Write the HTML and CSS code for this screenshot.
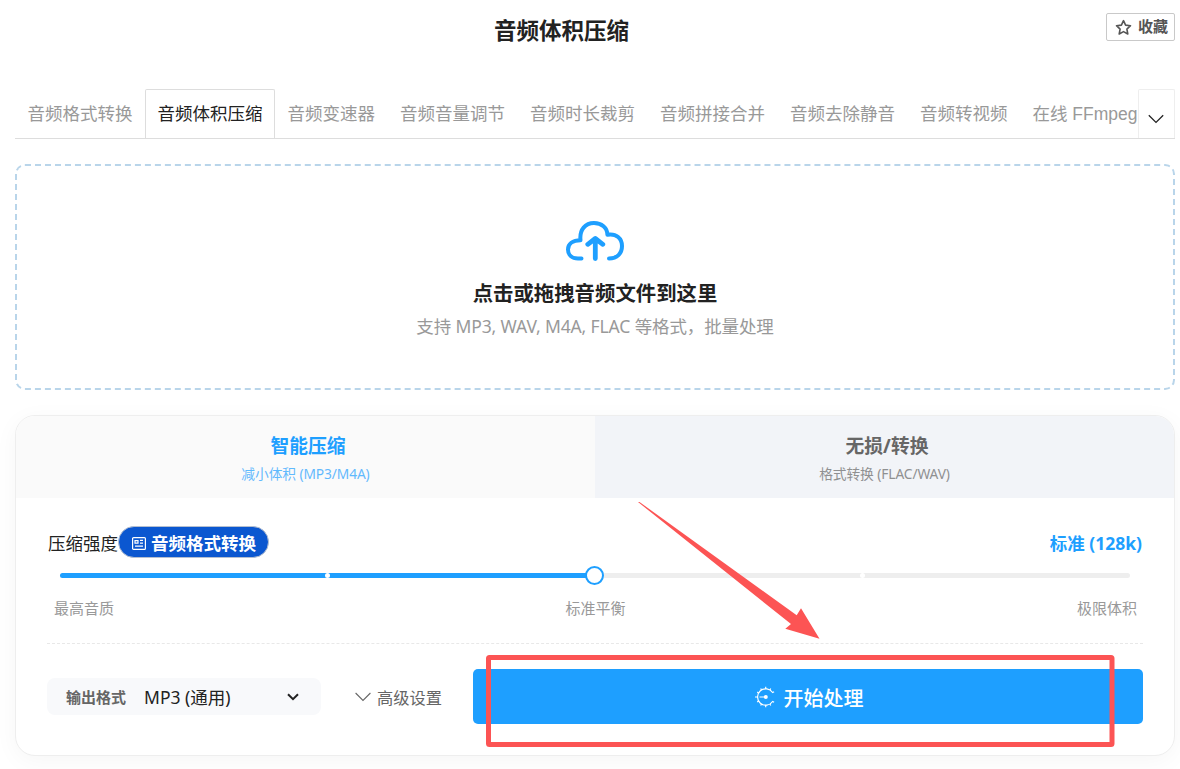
FILE: index.html
```html
<!DOCTYPE html>
<html lang="zh-CN">
<head>
    <meta charset="UTF-8">
    <meta name="viewport" content="width=device-width, initial-scale=1.0">
    <title>音频体积压缩</title>
    <link rel="stylesheet" href="styles.css">
</head>
<body>
    <div class="container">
        <header class="header">
            <h1>音频体积压缩</h1>
            <button class="btn-fav">
                <svg width="17" height="17" viewBox="0 0 17 17" fill="none" stroke="#555" stroke-width="1.6" stroke-linejoin="round"><path d="M8.5 1.6l2.1 4.5 4.9.6-3.6 3.4.9 4.9-4.3-2.4L4.2 15l.9-4.9L1.5 6.7l4.9-.6z"/></svg>
                <span>收藏</span>
            </button>
        </header>

        <!-- 工具导航 -->
        <nav class="tabs">
            <div class="tab-list">
                <a class="tab">音频格式转换</a>
                <a class="tab active">音频体积压缩</a>
                <a class="tab">音频变速器</a>
                <a class="tab">音频音量调节</a>
                <a class="tab">音频时长裁剪</a>
                <a class="tab">音频拼接合并</a>
                <a class="tab">音频去除静音</a>
                <a class="tab">音频转视频</a>
                <a class="tab">在线 FFmpeg</a>
            </div>
            <button class="tab-more">
                <svg width="16" height="10" viewBox="0 0 16 10" fill="none" stroke="#222" stroke-width="1.3"><path d="M.8 1.2L8 8.4l7.2-7.2"/></svg>
            </button>
        </nav>

        <!-- 上传区域 -->
        <div class="upload">
            <svg class="upload-icon" width="60" height="42" viewBox="0 0 60 42" fill="none" stroke="#1e9fff" stroke-width="4" stroke-linecap="round" stroke-linejoin="round">
                <path d="M16.5 38.5H13C7 38.5 3 34.8 3 29.5S7.500 20.300 15.500 20.300C14.300 9.500 20.500 3 29 3c7.500 0 13.400 4.500 13.400 11.800C51.500 13.300 57 18.500 57 26c0 7.500-5 12.500-13 12.500"/>
                <path stroke-width="4.800" d="M30.300 38.500V19M22.800 24.300l7.500-5.800 7.500 5.800"/>
            </svg>
            <div class="upload-title">点击或拖拽音频文件到这里</div>
            <div class="upload-desc">支持 MP3, WAV, M4A, FLAC 等格式，批量处理</div>
        </div>

        <!-- 设置面板 -->
        <div class="card">
            <div class="modes">
                <div class="mode active">
                    <div class="mode-name">智能压缩</div>
                    <div class="mode-desc">减小体积 (MP3/M4A)</div>
                </div>
                <div class="mode">
                    <div class="mode-name">无损/转换</div>
                    <div class="mode-desc">格式转换 (FLAC/WAV)</div>
                </div>
            </div>
            <div class="card-body">
                <div class="level-row">
                    <span class="level-label">压缩强度</span>
                    <span class="badge">
                        <svg width="14" height="13" viewBox="0 0 14 13" fill="none" stroke="#fff" stroke-width="1.2"><rect x=".6" y=".6" width="12.800" height="11.800" rx="1"/><path d="M3 3.600h3v2.600H3zM8 3.300h3M8 6.200h3M3 9.200h8"/></svg>
                        <span>音频格式转换</span>
                    </span>
                    <span class="level-value">标准 (128k)</span>
                </div>
                <div class="slider">
                    <div class="slider-fill"></div>
                    <i class="dot dot-1"></i>
                    <i class="dot dot-3"></i>
                    <i class="handle"></i>
                </div>
                <div class="slider-labels">
                    <span>最高音质</span>
                    <span>标准平衡</span>
                    <span>极限体积</span>
                </div>
                <div class="actions">
                    <div class="select">
                        <span class="select-label">输出格式</span>
                        <span class="select-value">MP3 (通用)</span>
                        <svg width="12" height="8" viewBox="0 0 12 8" fill="none" stroke="#222" stroke-width="2"><path d="M1 1.200l5 5 5-5"/></svg>
                    </div>
                    <div class="advanced">
                        <svg width="16" height="10" viewBox="0 0 16 10" fill="none" stroke="#666" stroke-width="1.100"><path d="M.6 1L8 8.400 15.400 1"/></svg>
                        <span>高级设置</span>
                    </div>
                    <button class="btn-start">
                        <svg width="20" height="22" viewBox="0 0 20 22" fill="none" stroke="#fff" stroke-width="1.200">
                            <path d="M17.600 6.500A8.200 8.200 0 1 0 17.600 15.500"/>
                            <path d="M0 11h2.500M4.500 11H10M10.700 3V.8M10.700 19v2.200M6.500 4L5.700 2.500M6.500 18l-.8 1.500M3.600 6.900L2.200 6M3.600 15.100l-1.400.9M14.900 4l.8-1.500M14.900 18l.8 1.500M17.200 6.800l1.900-1.100M17.200 15.200l1.900 1.100"/>
                            <circle cx="10.800" cy="11" r="2" fill="#fff" stroke="none"/>
                        </svg>
                        <span>开始处理</span>
                    </button>
                </div>
            </div>
        </div>
    </div>

    <!-- 操作提示 -->
    <svg class="guide" width="1180" height="769" viewBox="0 0 1180 769">
        <rect x="488.500" y="657.500" width="623.500" height="87" rx="1" fill="none" stroke="#fc5454" stroke-width="5"/>
        <path d="M638 502h1.500L796.700 615.300 801 608.300 819.500 638.700 785.300 628.700 791 624z" fill="#fc5454"/>
    </svg>
</body>
</html>
```
FILE: styles.css
```css
* {
    box-sizing: border-box;
}
body {
    margin: 0;
    height: 769px;
    overflow: hidden;
    background: #fff;
    color: #222;
    font-family: "Noto Sans", "Noto Sans CJK SC", sans-serif;
}
button {
    font-family: inherit;
    padding: 0;
}
svg {
    display: block;
    flex: none;
}
.container {
    padding: 0 5px 0 15px;
}
.header {
    display: grid;
    grid-template-columns: 1fr auto 1fr;
    height: 89px;
    padding-top: 13px;
    align-items: start;
}
.header h1 {
    grid-column: 2;
    margin: 0 67px 0 0;
    font-size: 22.5px;
    line-height: 35px;
    font-weight: 600;
}
.btn-fav {
    justify-self: end;
    display: flex;
    align-items: center;
    gap: 6px;
    width: 69px;
    height: 28px;
    padding-left: 8px;
    border: 1px solid #c9c9c9;
    border-radius: 2px;
    background: #fff;
    color: #555;
    font-size: 15px;
    line-height: 24px;
    font-weight: 700;
    white-space: nowrap;
}
.btn-fav span {
    padding-bottom: 2px;
}

/* 导航 */
.tabs {
    display: flex;
    height: 50px;
    border-bottom: 1px solid #ddd;
}
.tab-list {
    display: flex;
    width: 1123px;
    overflow: hidden;
    margin-bottom: -1px;
}
.tab {
    flex: none;
    padding: 0 12.5px;
    font: 17.5px/50px "Liberation Sans", "Noto Sans CJK SC", sans-serif;
    color: #999;
    white-space: nowrap;
}
.tab.active {
    height: 49px;
    padding: 0 11.5px;
    border: 1px solid #ddd;
    border-bottom: none;
    border-radius: 2px 2px 0 0;
    background: #fff;
    color: #222;
    line-height: 48px;
}
.tab-more {
    display: flex;
    align-items: center;
    justify-content: center;
    width: 37px;
    height: 49px;
    padding: 9px 1px 0 0;
    border: 1px solid #eee;
    border-bottom: none;
    border-radius: 2px 2px 0 0;
    background: #fff;
}

/* 上传 */
.upload {
    display: flex;
    flex-direction: column;
    align-items: center;
    height: 226px;
    margin-top: 25px;
    padding-top: 54px;
    border: 2px dashed #b9d5ea;
    border-radius: 10px;
}
.upload-title {
    margin-top: 14px;
    font-size: 20.4px;
    line-height: 34px;
    font-weight: 600;
}
.upload-desc {
    font-size: 17.5px;
    line-height: 32px;
    letter-spacing: -.12px;
    color: #999;
}

/* 面板 */
.card {
    height: 341px;
    margin-top: 25px;
    border: 1px solid #eee;
    border-radius: 20px;
    overflow: hidden;
    background: #fff;
    box-shadow: 0 5px 25px rgba(0, 0, 0, .04);
}
.modes {
    display: grid;
    grid-template-columns: 1fr 1fr;
    height: 82px;
}
.mode {
    padding-top: 15px;
    background: #f2f4f8;
    color: #666;
    text-align: center;
}
.mode.active {
    background: #fafafa;
    color: #1e9fff;
}
.mode-name {
    padding-left: 5px;
    font-size: 18.75px;
    line-height: 30px;
    font-weight: 700;
}
.mode-desc {
    font-size: 13.75px;
    line-height: 26px;
    letter-spacing: -.1px;
    opacity: .7;
}
.card-body {
    padding: 28px 31px 0;
}
.level-row {
    display: flex;
    align-items: center;
    height: 32px;
}
.level-label {
    padding: 2px 0 0 1px;
    font-size: 17.5px;
    line-height: 32px;
}
.badge {
    display: flex;
    align-items: center;
    gap: 5px;
    width: 151px;
    height: 32px;
    padding: 2px 0 0 13px;
    border: 1px solid #b5bfd0;
    border-radius: 16px;
    background: #0b57d0;
    color: #fff;
    font-size: 17.5px;
    line-height: 30px;
    font-weight: 700;
    white-space: nowrap;
}
.level-value {
    margin-left: auto;
    padding-right: 1px;
    color: #1e9fff;
    font-size: 17.5px;
    font-weight: 700;
}
.slider {
    position: relative;
    height: 5px;
    margin: 15px 13px 0;
    border-radius: 3px;
    background: #eee;
}
.slider-fill {
    width: 50%;
    height: 5px;
    border-radius: 3px;
    background: #1e9fff;
}
.dot {
    position: absolute;
    top: 0;
    width: 5px;
    height: 5px;
    margin-left: -3px;
    border-radius: 50%;
    background: #fff;
}
.dot-1 {
    left: 25%;
}
.dot-3 {
    left: 75%;
}
.handle {
    position: absolute;
    left: 50%;
    top: -7px;
    width: 19px;
    height: 19px;
    margin-left: -10px;
    border: 2px solid #1e9fff;
    border-radius: 50%;
    background: #fff;
}
.slider-labels {
    display: flex;
    justify-content: space-between;
    height: 66px;
    padding: 17px 6px 0 7px;
    border-bottom: 1px dashed #e8e8e8;
    color: #999;
    font-size: 15px;
    line-height: 26px;
}
.actions {
    display: flex;
    align-items: center;
    height: 55px;
    margin-top: 25px;
}
.select {
    display: flex;
    align-items: center;
    width: 274px;
    height: 37px;
    padding: 0 22px 0 19px;
    border-radius: 8px;
    background: #f8f9fb;
}
.select-label {
    margin-right: 18px;
    color: #666;
    font-size: 15px;
    font-weight: 700;
}
.select-value {
    margin-right: auto;
    font-size: 17.5px;
}
.advanced {
    display: flex;
    align-items: center;
    gap: 6px;
    margin-left: 34px;
    color: #666;
    font-size: 16.25px;
}
.btn-start {
    display: flex;
    align-items: center;
    justify-content: center;
    gap: 9px;
    width: 670px;
    height: 55px;
    margin-left: auto;
    padding: 1px 0 0 2px;
    border: none;
    border-radius: 5px;
    background: #1e9fff;
    color: #fff;
    font-size: 20px;
    font-weight: 500;
}
.guide {
    position: absolute;
    left: 0;
    top: 0;
    pointer-events: none;
}
```
